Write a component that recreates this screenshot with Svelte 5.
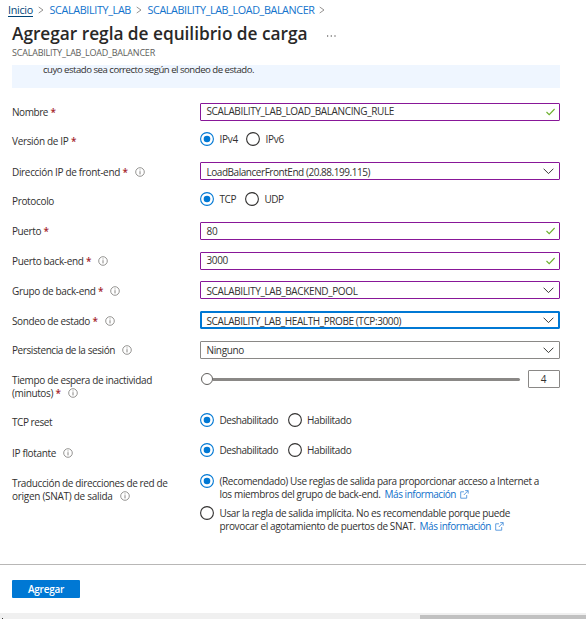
<script>
  // Adjusts tracking so that a line of text takes up the given width.
  function fit(node, width) {
    const natural = node.getBoundingClientRect().width;
    const count = node.textContent.length;
    node.style.letterSpacing = (width - natural) / count + 'px';
  }

  const crumbs = [
    { text: 'Inicio', w: 25, home: true },
    { text: 'SCALABILITY_LAB', w: 81.5 },
    { text: 'SCALABILITY_LAB_LOAD_BALANCER', w: 167 }
  ];

  const toggle = [
    { text: 'Deshabilitado', w: 58.5, on: true },
    { text: 'Habilitado', w: 44.5 }
  ];

  const rows = [
    { h: 29, label: [['Nombre', 36]], pad: 3, req: true, kind: 'text', value: 'SCALABILITY_LAB_LOAD_BALANCING_RULE', w: 187.5, lift: true },
    { h: 30, label: [['Versión de IP', 56.5]], pad: 3, req: true, kind: 'radio', gap: 8, options: [{ text: 'IPv4', w: 18.5, on: true }, { text: 'IPv6', w: 18.5 }] },
    { h: 30, label: [['Dirección IP de front-end', 108]], pad: 4, req: true, info: true, kind: 'select', value: 'LoadBalancerFrontEnd (20.88.199.115)', w: 163.5 },
    { h: 30, label: [['Protocolo', 42]], pad: 3, kind: 'radio', gap: 9, options: [{ text: 'TCP', w: 16.5, on: true }, { text: 'UDP', w: 19 }] },
    { h: 30, label: [['Puerto', 29]], pad: 3, req: true, kind: 'text', value: '80', w: 11 },
    { h: 29, label: [['Puerto back-end', 71.5]], pad: 3, req: true, info: true, kind: 'text', value: '3000', w: 21.5, lift: true },
    { h: 30, label: [['Grupo de back-end', 83.5]], pad: 4, req: true, info: true, kind: 'select', value: 'SCALABILITY_LAB_BACKEND_POOL', w: 151 },
    { h: 30, label: [['Sondeo de estado', 78]], pad: 4, req: true, info: true, kind: 'select', focus: true, value: 'SCALABILITY_LAB_HEALTH_PROBE (TCP:3000)', w: 194.5 },
    { h: 29, label: [['Persistencia de la sesión', 103]], pad: 3, info: true, kind: 'select', plain: true, value: 'Ninguno', w: 37.5 },
    { h: 43, label: [['Tiempo de espera de inactividad', 140], ['(minutos)', 41]], pad: 4, req: true, info: true, kind: 'slider' },
    { h: 30, label: [['TCP reset', 40]], pad: 3, kind: 'radio', gap: 9.5, options: toggle },
    { h: 31, label: [['IP flotante', 44]], pad: 4, info: true, kind: 'radio', gap: 9.5, options: toggle },
    { h: 90, label: [['Traducción de direcciones de red de', 155.5], ['origen (SNAT) de salida', 100.5]], pad: 3, info: true, kind: 'snat' }
  ];

  const snat = [
    { on: true, first: ['(Recomendado) Use reglas de salida para proporcionar acceso a Internet a', 319.5], second: ['los miembros del grupo de back-end.', 161] },
    { first: ['Usar la regla de salida implícita. No es recomendable porque puede', 290.5], second: ['provocar el agotamiento de puertos de SNAT.', 196] }
  ];
</script>

{#snippet radio(on)}
  <svg class="dot" width="14" height="14" viewBox="0 0 14 14">
    <circle cx="7" cy="7" r="6.4" fill="#fff" stroke={on ? '#0078d4' : '#323130'} stroke-width="1.1" />
    {#if on}<circle cx="7" cy="7" r="3.3" fill="#0078d4" />{/if}
  </svg>
{/snippet}

{#snippet separator()}
  <svg class="sep" width="6" height="8" viewBox="0 0 6 8"><path d="M.7 1 5 4 .7 7" fill="none" stroke="#8a8886" stroke-width=".9" /></svg>
{/snippet}

<div class="page">
  <nav>
    {#each crumbs as c}
      <a class:home={c.home} href="#top" style:width="{c.w}px"><span use:fit={c.w}>{c.text}</span></a>
      {@render separator()}
    {/each}
  </nav>

  <header>
    <h1><span use:fit={295.5}>Agregar regla de equilibrio de carga</span></h1>
    <svg class="more" width="9" height="2" viewBox="0 0 9 2"><path d="M0 .5h1.2v1H0zM3.7.5h1.2v1H3.7zM7.4.5h1.2v1H7.4z" fill="#323130" /></svg>
  </header>
  <p class="sub"><span use:fit={143}>SCALABILITY_LAB_LOAD_BALANCER</span></p>

  <div class="banner"><span use:fit={211}>cuyo estado sea correcto según el sondeo de estado.</span></div>

  <main>
    {#each rows as r}
      <div class="row" style:height="{r.h}px">
        <div class="label" style:padding-top="{r.pad}px">
          {#each r.label as line, i}
            <div class="line">
              <span use:fit={line[1]}>{line[0]}</span>
              {#if i === r.label.length - 1}
                {#if r.req}<b class="req">*</b>{/if}
                {#if r.info}
                  <svg class="info" width="10" height="10" viewBox="0 0 10 10">
                    <circle cx="5" cy="5" r="4.3" fill="none" stroke="#7a7876" stroke-width=".8" />
                    <path d="M5 4.2v3.2M5 2.5v.9" stroke="#7a7876" stroke-width=".9" />
                  </svg>
                {/if}
              {/if}
            </div>
          {/each}
        </div>

        {#if r.kind === 'text' || r.kind === 'select'}
          <div class="box" class:focus={r.focus} class:plain={r.plain} class:entry={r.kind === 'text'} class:lift={r.lift}>
            <span use:fit={r.w}>{r.value}</span>
            {#if r.kind === 'text'}
              <svg width="9" height="8" viewBox="0 0 9 8"><path d="M.5 4 3.2 6.7 8.6 1" fill="none" stroke="#6bb02c" stroke-width="1.1" /></svg>
            {:else}
              <svg width="11" height="7" viewBox="0 0 11 7"><path d="M.6.7 5.5 5.6 10.4.7" fill="none" stroke="#3b3a39" stroke-width="1" /></svg>
            {/if}
          </div>
        {:else if r.kind === 'radio'}
          <div class="options" style:gap="{r.gap}px">
            {#each r.options as o}
              <div class="option" style:width="{19.5 + o.w}px">
                {@render radio(o.on)}
                <span use:fit={o.w}>{o.text}</span>
              </div>
            {/each}
          </div>
        {:else if r.kind === 'slider'}
          <div class="slider">
            <i class="knob"></i>
            <i class="track"></i>
            <div class="num">4</div>
          </div>
        {:else}
          <div class="snat">
            {#each snat as s}
              <div class="choice">
                {@render radio(s.on)}
                <div class="desc">
                  <div class="line"><span use:fit={s.first[1]}>{s.first[0]}</span></div>
                  <div class="line">
                    <span use:fit={s.second[1]}>{s.second[0]}</span>
                    <a class="learn" href="#info"><span use:fit={71.5}>Más información</span></a>
                    <svg width="9" height="9" viewBox="0 0 9 9"><path d="M4 1.8H.7v6.4h6V5M5.2.6h3v3M8 .8 3.8 5" fill="none" stroke="#3a87d8" stroke-width=".8" /></svg>
                  </div>
                </div>
              </div>
            {/each}
          </div>
        {/if}
      </div>
    {/each}
  </main>

  <footer><button><span use:fit={36}>Agregar</span></button></footer>
  <div class="scroll"><i class="tick"></i><i class="thumb"></i></div>
</div>

<style>
  :global(body) { margin: 0; background: #fff; overflow: hidden; }
  .page {
    width: 586px; height: 619px; overflow: hidden; display: flex; flex-direction: column;
    font: 10px/13px "Open Sans", "Noto Sans", sans-serif; color: #323130; background: #fff;
  }
  span { white-space: pre; display: inline-block; flex: none; }
  svg { display: block; flex: none; }
  a { color: #0f6cbd; text-decoration: none; display: block; }

  nav { display: flex; align-items: center; height: 20px; box-sizing: border-box; padding-left: 8px; font-size: 10.8px; line-height: 20px; }
  nav a { color: #1373cc; }
  nav .home { color: #004578; }
  nav .home span { text-decoration: underline; text-underline-offset: 2px; }
  .sep { margin: 0 6px 0 4.5px; }

  header { display: flex; height: 26px; padding-left: 12px; align-items: flex-start; }
  h1 { margin: 0; font-size: 17.3px; line-height: 27px; font-weight: 600; width: 315px; color: #292827; }
  .more { margin-top: 15px; }
  .sub { margin: 0; padding-left: 12px; height: 19px; font-size: 9px; line-height: 13px; color: #605e5c; }
  .banner { margin-left: 12px; width: 548px; height: 23px; background: #eff6ff; box-sizing: border-box; padding-left: 31px; font-size: 9.6px; line-height: 10px; }

  main { padding: 15px 0 0 12px; }
  .row { display: grid; grid-template-columns: 188px 360px; align-items: start; }
  .line { display: flex; height: 13px; align-items: center; }
  .req { color: #a4262c; font-weight: 600; margin-left: 2.5px; width: 5px; }
  .info { margin: -1px 0 0 7px; }

  .box {
    box-sizing: border-box; height: 18px; border: 1px solid #881798; border-radius: 1px;
    padding: 0 5.5px 0 5.5px; display: flex; align-items: center; justify-content: space-between;
  }
  .box span { margin-top: 2px; }
  .box.entry { padding-right: 4px; }
  .box.entry span { margin-top: 1px; }
  .box.lift span { margin-top: -1px; }
  .box.plain { border-color: #8a8886; }
  .box.plain span { margin-top: 0; }
  .box.focus { border-color: #0078d4; box-shadow: inset 0 0 0 1px #0078d4; }

  .options { display: flex; height: 14px; }
  .option { display: flex; align-items: flex-start; }
  .option span { margin: 1px 0 0 5.5px; }

  .slider { display: flex; height: 18px; align-items: center; }
  .knob { width: 12px; height: 12px; box-sizing: border-box; border: 1px solid #605e5c; border-radius: 50%; margin-left: 1px; }
  .track { width: 307px; height: 3px; border-radius: 0 2px 2px 0; background: #8a8886; margin-right: 8px; }
  .num { width: 32px; height: 18px; box-sizing: border-box; border: 1px solid #8a8886; border-radius: 1px; text-align: center; line-height: 17px; padding-right: 1px; }

  .snat { display: grid; gap: 6px; }
  .choice { display: flex; height: 26px; }
  .desc { margin: 1px 0 0 5.5px; }
  .learn { color: #0f6fca; width: 72px; margin: 0 3px 0 4px; }

  footer { box-sizing: border-box; height: 49px; border-top: 1px solid #b8b7b6; padding: 15px 0 0 12px; }
  button { width: 68px; height: 18px; border: 0; border-radius: 1px; background: #0078d4; color: #fff; font: 600 10px/18px "Open Sans", "Noto Sans", sans-serif; padding: 0; display: flex; justify-content: center; }
  .scroll { height: 6px; background: #f0f0f0; display: flex; align-items: flex-end; }
  .tick { width: 1px; height: 1px; background: #333; margin: 0 417px 0 2px; }
  .thumb { flex: 1; height: 4px; background: #c1c1c1; }
</style>
